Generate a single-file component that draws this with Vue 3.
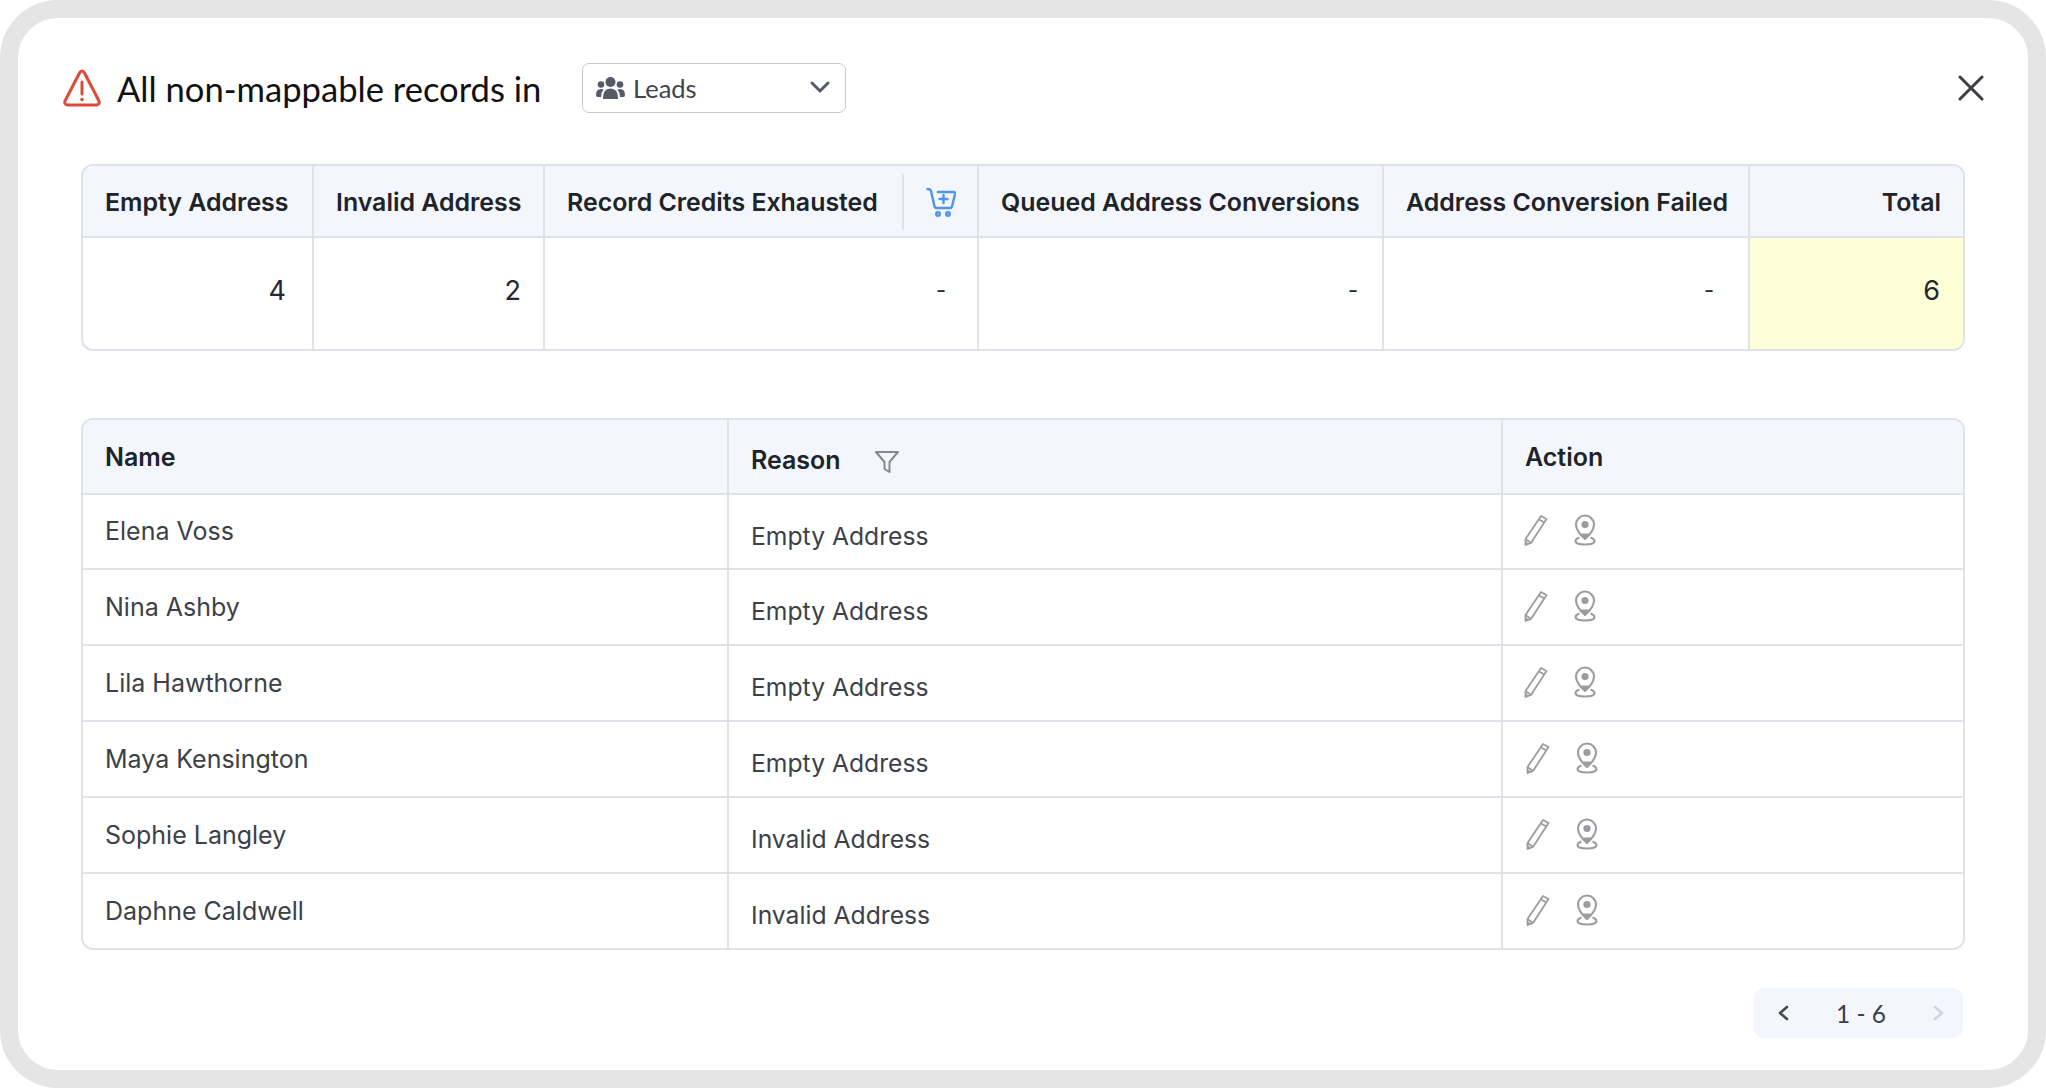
<script setup>
const summary = [
  { label: 'Empty Address', value: '4' },
  { label: 'Invalid Address', value: '2' },
  { label: 'Record Credits Exhausted', value: '-', cart: true },
  { label: 'Queued Address Conversions', value: '-' },
  { label: 'Address Conversion Failed', value: '-' },
  { label: 'Total', value: '6', total: true }
]

const records = [
  { name: 'Elena Voss', reason: 'Empty Address' },
  { name: 'Nina Ashby', reason: 'Empty Address' },
  { name: 'Lila Hawthorne', reason: 'Empty Address' },
  { name: 'Maya Kensington', reason: 'Empty Address', shift: true },
  { name: 'Sophie Langley', reason: 'Invalid Address', shift: true },
  { name: 'Daphne Caldwell', reason: 'Invalid Address', shift: true }
]
</script>

<template>
  <div class="frame">
    <header class="modal-head">
      <svg class="warn-icon" viewBox="0 0 38 38" fill="none" stroke="#dc4a38" stroke-width="3" stroke-linejoin="round" stroke-linecap="round">
        <path d="M19 2 Q20.500 2 21.500 4 L36 32 Q37 35.500 33.500 36 L4.500 36 Q1 35.500 2 32 L16.500 4 Q17.500 2 19 2 Z" />
        <path d="M19 13 V25" />
        <path d="M19 30.500 V30.600" stroke-width="3.600" />
      </svg>
      <h1 class="modal-title">All non-mappable records in</h1>
      <div class="module-select">
        <svg class="people-icon" viewBox="0 0 29 22" fill="#555b66">
          <circle cx="14.500" cy="5" r="5" />
          <circle cx="5" cy="7.500" r="3.300" />
          <circle cx="24" cy="7.500" r="3.300" />
          <path d="M7 22 Q6.500 11.500 14.500 11.500 Q22.500 11.500 22 22 Z" />
          <path d="M0 18 Q0 12 5 12 Q6.500 12 7.500 12.800 Q5 15.500 5 20 L1.500 20 Q0 20 0 18 Z" />
          <path d="M29 18 Q29 12 24 12 Q22.500 12 21.500 12.800 Q24 15.500 24 20 L27.500 20 Q29 20 29 18 Z" />
        </svg>
        <span class="module-name">Leads</span>
        <svg class="chevron" viewBox="0 0 20 12" fill="none" stroke="#555b66" stroke-width="3" stroke-linecap="round" stroke-linejoin="round">
          <path d="M2 2 L10 10 L18 2" />
        </svg>
      </div>
      <svg class="close-icon" viewBox="0 0 26 26" fill="none" stroke="#3a3d42" stroke-width="3" stroke-linecap="round">
        <path d="M2 2 L24 24 M24 2 L2 24" />
      </svg>
    </header>

    <section class="summary-table">
      <div
        v-for="col in summary"
        :key="col.label"
        class="summary-col"
        :class="{ 'is-total': col.total }"
      >
        <div class="summary-label">
          <span>{{ col.label }}</span>
          <span v-if="col.cart" class="cart-slot">
            <svg class="cart-icon" viewBox="0 0 30 30" fill="none" stroke="#4d94f5" stroke-width="2.400" stroke-linecap="round" stroke-linejoin="round">
              <path d="M1.500 2 Q4.500 2 5 4 L8.500 19.500 Q9 21 10.500 21 H24 Q25.500 21 26 19.500 L29 7 Q29.200 5 27.500 5 H12" />
              <path d="M17.500 8 V16 M13.500 12 H21.500" />
              <circle cx="12" cy="27" r="1.800" />
              <circle cx="22" cy="27" r="1.800" />
            </svg>
          </span>
        </div>
        <div class="summary-value" :class="{ 'is-dash': col.value === '-' }">{{ col.value }}</div>
      </div>
    </section>

    <section class="records-table">
      <div class="row head-row">
        <div class="cell">Name</div>
        <div class="cell reason-head">
          <span>Reason</span>
          <svg class="filter-icon" viewBox="0 0 24 22" fill="none" stroke="#84888f" stroke-width="2" stroke-linejoin="round">
            <path d="M1 1 H23 L14.500 11 V21 L9.500 18 V11 Z" />
          </svg>
        </div>
        <div class="cell">Action</div>
      </div>
      <div v-for="rec in records" :key="rec.name" class="row">
        <div class="cell">{{ rec.name }}</div>
        <div class="cell reason-cell">{{ rec.reason }}</div>
        <div class="cell action-cell" :class="{ shifted: rec.shift }">
          <svg class="pencil-icon" viewBox="0 0 24 32" fill="none" stroke="#9a9c9f" stroke-width="1.800" stroke-linejoin="round">
            <path d="M17 2 L22.500 5 L7 29 L1.500 31 L1.500 25 Z" />
            <path d="M15 5.500 L20.500 8.500" />
            <path d="M1.500 25 L7 29" />
            <path d="M1.500 31 V27.500 L4.500 30 Z" fill="#9a9c9f" stroke-width="1" />
          </svg>
          <svg class="pin-icon" viewBox="0 0 22 32" fill="none" stroke="#9a9c9f" stroke-width="2.100">
            <path d="M11 25 Q2 17 2 10.500 A9 9 0 0 1 20 10.500 Q20 17 11 25 Z" stroke-linejoin="round" />
            <path d="M7 19.500 H15 L11 26 Z" fill="#9a9c9f" stroke="none" />
            <circle cx="11" cy="10.500" r="3.600" fill="#9a9c9f" stroke="none" />
            <path d="M5.500 23.500 Q1.500 25 1.500 27 Q1.500 30.500 11 30.500 Q20.500 30.500 20.500 27 Q20.500 25 16.500 23.500" />
          </svg>
        </div>
      </div>
    </section>

    <footer class="pager">
      <svg class="pager-arrow" viewBox="0 0 12 16" fill="none" stroke="#44484f" stroke-width="2.600" stroke-linecap="round" stroke-linejoin="round">
        <path d="M10 2 L3 8 L10 14" />
      </svg>
      <span class="pager-text">1 - 6</span>
      <svg class="pager-arrow" viewBox="0 0 12 16" fill="none" stroke="#d2d4d8" stroke-width="2.600" stroke-linecap="round" stroke-linejoin="round">
        <path d="M2 2 L9 8 L2 14" />
      </svg>
    </footer>
  </div>
</template>

<style scoped>
.frame {
  box-sizing: border-box;
  width: 2046px;
  height: 1088px;
  padding: 45px 63px 0 45px;
  background: #fff;
  border: 18px solid #e5e5e5;
  border-radius: 58px;
  overflow: hidden;
  font-family: Inter, "Noto Sans", sans-serif;
}

.modal-head {
  display: flex;
  align-items: center;
  height: 50px;
  margin-bottom: 51px;
}

.warn-icon {
  width: 38px;
  height: 38px;
  flex-shrink: 0;
}

.modal-title {
  flex-shrink: 0;
  margin: 0 0 0 16px;
  width: 465px;
  font-family: Lato, sans-serif;
  font-size: 34.600px;
  font-weight: 400;
  color: #111;
  white-space: nowrap;
}

.module-select {
  box-sizing: border-box;
  display: flex;
  align-items: center;
  flex-shrink: 0;
  width: 264px;
  height: 50px;
  padding: 0 15px 0 13px;
  border: 1.500px solid #c6c9d0;
  border-radius: 7px;
}

.people-icon {
  width: 29px;
  height: 22px;
}

.module-name {
  flex: 1;
  margin-left: 8px;
  font-family: Lato, sans-serif;
  font-size: 25.500px;
  color: #3f444c;
}

.chevron {
  width: 20px;
  height: 12px;
  margin-bottom: 2px;
}

.close-icon {
  width: 26px;
  height: 26px;
  margin-left: auto;
  margin-right: -19px;
}

.summary-table {
  display: grid;
  grid-template-columns: 229px 231px 434px 405px 366px 1fr;
  width: 1884px;
  height: 187px;
  margin-left: 18px;
  box-sizing: border-box;
  border: 2px solid #dfe2e8;
  border-radius: 12px;
  overflow: hidden;
}

.summary-col {
  display: flex;
  flex-direction: column;
  border-left: 2px solid #dfe2e8;
}

.summary-col:first-child {
  border-left: none;
}

.summary-label {
  box-sizing: border-box;
  display: flex;
  align-items: center;
  height: 72px;
  padding: 2px 22px 0;
  background: #f3f6fd;
  border-bottom: 2px solid #dfe2e8;
  font-size: 24.900px;
  font-weight: 600;
  color: #202328;
  white-space: nowrap;
}

.cart-slot {
  display: flex;
  align-items: center;
  height: 56px;
  margin-left: auto;
  margin-right: -1px;
  padding-left: 22px;
  border-left: 2px solid #dfe2e8;
}

.cart-icon {
  width: 30px;
  height: 30px;
}

.summary-value {
  flex: 1;
  display: flex;
  align-items: center;
  justify-content: flex-end;
  padding: 0 24px 7px 0;
  font-size: 27px;
  color: #25282d;
}

.summary-value.is-dash {
  font-size: 22px;
}

.summary-col:nth-child(1) .summary-value { padding-right: 26px; }
.summary-col:nth-child(2) .summary-value { padding-right: 22px; }
.summary-col:nth-child(3) .summary-value { padding-right: 31px; }
.summary-col:nth-child(4) .summary-value { padding-right: 24px; }
.summary-col:nth-child(5) .summary-value { padding-right: 34px; }
.summary-col:nth-child(6) .summary-value { padding-right: 23px; }

.is-total .summary-label {
  justify-content: flex-end;
}

.is-total .summary-value {
  background: #feffd6;
}

.records-table {
  box-sizing: border-box;
  width: 1884px;
  height: 532px;
  margin: 67px 0 38px 18px;
  border: 2px solid #dfe2e8;
  border-radius: 12px;
  overflow: hidden;
}

.row {
  display: grid;
  grid-template-columns: 644px 774px 1fr;
  height: 76px;
  border-top: 2px solid #dfe2e8;
  box-sizing: border-box;
  font-size: 25px;
  color: #3c4149;
}

.row:first-child {
  border-top: none;
}

.row:nth-child(2) {
  height: 74.700px;
}

.head-row {
  height: 73px;
  background: #f3f6fd;
  font-weight: 600;
  color: #202328;
}

.cell {
  display: flex;
  align-items: center;
  box-sizing: border-box;
  padding: 0 22px;
  border-left: 2px solid #dfe2e8;
}

.cell:first-child {
  border-left: none;
}

.reason-head {
  padding-top: 6px;
}

.reason-cell {
  padding-top: 9px;
  font-size: 24.700px;
}

.filter-icon {
  width: 24px;
  height: 22px;
  margin: 5px 0 0 34px;
}

.action-cell {
  gap: 26px;
  padding-left: 20.500px;
  padding-bottom: 2px;
}

.action-cell.shifted {
  padding-left: 23px;
}

.pencil-icon {
  width: 24px;
  height: 32px;
}

.pin-icon {
  width: 22px;
  height: 32px;
}

.pager {
  box-sizing: border-box;
  display: flex;
  align-items: center;
  justify-content: space-between;
  width: 209px;
  height: 50px;
  margin-left: auto;
  margin-right: 2px;
  padding: 0 18px 0 23px;
  background: #f3f6fd;
  border-radius: 10px;
}

.pager-arrow {
  width: 12px;
  height: 16px;
}

.pager-text {
  font-family: Lato, sans-serif;
  font-size: 24.500px;
  color: #3c4149;
}
</style>

<style>
body {
  margin: 0;
  background: #fff;
}
</style>
